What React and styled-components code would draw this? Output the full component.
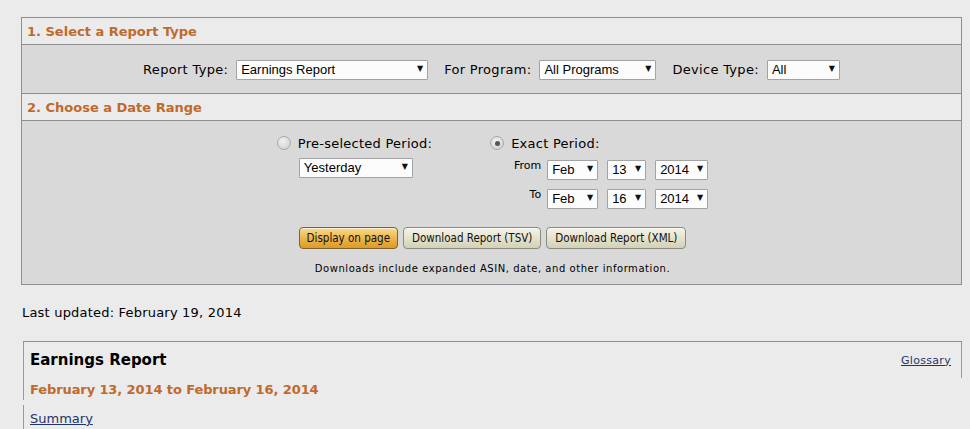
import React from "react";
import styled, { createGlobalStyle } from "styled-components";

const GlobalStyle = createGlobalStyle`
  body {
    margin: 0;
    background: #ebebeb;
    font-family: "DejaVu Sans", Verdana, sans-serif;
    color: #000;
  }
`;

// 페이지 전체
const Page = styled.div`
  padding: 17px 8px 0 21px;
`;

const Panel = styled.div`
  border: 1px solid #8e8e8e;
  background: #ebebeb;
`;

const SectionHeader = styled.div`
  height: 26px;
  line-height: 27px;
  padding-left: 5px;
  font-size: 13px;
  font-weight: bold;
  color: #bf6a2c;
  border-bottom: 1px solid #8e8e8e;
`;

const TypeBand = styled.div`
  height: 48px;
  background: #d9d9d9;
  border-bottom: 1px solid #8e8e8e;
  display: flex;
  justify-content: center;
  align-items: center;
  gap: 16px;
`;

const Field = styled.div`
  display: flex;
  align-items: center;
  gap: 8px;
`;

const Label = styled.span`
  font-size: 13px;
  letter-spacing: 0.3px;
`;

const SelectWrap = styled.div`
  position: relative;
  width: ${(p) => p.w}px;
  height: 20px;
`;

const NativeSelect = styled.select`
  appearance: none;
  -webkit-appearance: none;
  width: 100%;
  height: 100%;
  margin: 0;
  padding: 0 0 0 ${(p) => p.pad || 4}px;
  box-sizing: border-box;
  border: 1px solid #a3a3a3;
  border-radius: 1px;
  background: #fcfcfc;
  font-family: "Liberation Sans", Arial, sans-serif;
  font-size: 13px;
  color: #000;
  outline: none;
`;

const Arrow = styled.span`
  position: absolute;
  right: 5px;
  top: 50%;
  transform: translateY(-50%);
  font-size: 8px;
  line-height: 1;
  pointer-events: none;
  color: #111;
`;

const Select = ({ w, value, pad }) => (
  <SelectWrap w={w}>
    <NativeSelect pad={pad} defaultValue={value}>
      <option>{value}</option>
    </NativeSelect>
    <Arrow>▼</Arrow>
  </SelectWrap>
);

const DateBand = styled.div`
  background: #d9d9d9;
  padding: 14px 0 9px;
`;

const Columns = styled.div`
  display: flex;
  justify-content: center;
  gap: 58px;
  padding-left: 2px;
`;

const Column = styled.div`
  display: flex;
  flex-direction: column;
`;

const RadioRow = styled.label`
  display: flex;
  align-items: center;
  gap: 7px;
  height: 16px;
  font-size: 13px;
  letter-spacing: 0.25px;
  margin-bottom: ${(p) => p.mb}px;
`;

const Radio = styled.span`
  width: 12px;
  height: 12px;
  border-radius: 50%;
  border: 1px solid #a9a9a9;
  background: radial-gradient(circle at 40% 35%, #f2f2f2, #c9c9c9);
  display: flex;
  align-items: center;
  justify-content: center;
  &::after {
    content: "";
    width: 5px;
    height: 5px;
    border-radius: 50%;
    background: ${(p) => (p.checked ? "#555" : "transparent")};
  }
`;

const Indent = styled.div`
  margin-left: 22px;
`;

const DateGrid = styled.div`
  display: grid;
  grid-template-columns: 51px auto;
  row-gap: 9px;
  column-gap: 6px;
`;

const SmallLabel = styled.span`
  font-size: 11px;
  text-align: right;
  line-height: 1;
  padding-top: 1px;
`;

const DateSelects = styled.div`
  display: flex;
  gap: 9px;
`;

const Buttons = styled.div`
  display: flex;
  justify-content: center;
  gap: 5px;
  margin-top: 19px;
  padding-left: 2px;
`;

const Button = styled.button`
  height: 22px;
  padding: 0 ${(p) => (p.primary ? 7 : 8)}px;
  border-radius: 4px;
  border: 1px solid ${(p) => (p.primary ? "#7d6330" : "#8b8b80")};
  background: ${(p) =>
    p.primary
      ? "linear-gradient(#f9dc8c, #eab44a 55%, #dd9a24)"
      : "linear-gradient(#f4f3e8, #e3e1cb 55%, #d2d0b6)"};
  font-family: "DejaVu Sans Condensed", Tahoma, sans-serif;
  font-size: 11.5px;
  color: #111;
  box-shadow: inset 0 1px 0 rgba(255, 255, 255, 0.6);
  cursor: pointer;
`;

const Note = styled.div`
  margin-top: 13px;
  text-align: center;
  font-size: 10px;
  letter-spacing: 0.55px;
  line-height: 13px;
  padding-left: 2px;
`;

const Updated = styled.div`
  margin: 20px 0 0 1px;
  font-size: 13px;
  letter-spacing: 0.2px;
  line-height: 16px;
`;

const ReportBox = styled.div`
  margin: 20px 0 0 2px;
  border-top: 1px solid #8e8e8e;
`;

const ReportRow = styled.div`
  display: flex;
  justify-content: space-between;
  align-items: center;
  padding: 0 10px 0 6px;
  border-left: 1px solid #9a9a9a;
  border-right: ${(p) => (p.edge ? "1px solid #9a9a9a" : "none")};
  height: ${(p) => p.h}px;
  margin-bottom: ${(p) => p.mb || 0}px;
`;

const ReportTitle = styled.h2`
  margin: 0;
  font-size: 15px;
  font-weight: bold;
`;

const DateTitle = styled.h3`
  margin: 0;
  font-size: 13px;
  font-weight: bold;
  color: #bf6a2c;
  letter-spacing: -0.1px;
`;

const Link = styled.a`
  color: #1f3468;
  text-decoration: underline;
  font-size: ${(p) => p.size}px;
  letter-spacing: ${(p) => (p.size > 12 ? 0 : 0.3)}px;
  cursor: pointer;
`;

const App = () => {
  return (
    <>
      <GlobalStyle />
      <Page>
        <Panel>
          <SectionHeader>1. Select a Report Type</SectionHeader>
          <TypeBand>
            <Field>
              <Label>Report Type:</Label>
              <Select w={192} value="Earnings Report" />
            </Field>
            <Field>
              <Label>For Program:</Label>
              <Select w={117} value="All Programs" />
            </Field>
            <Field>
              <Label>Device Type:</Label>
              <Select w={73} value="All" />
            </Field>
          </TypeBand>
          <SectionHeader>2. Choose a Date Range</SectionHeader>
          <DateBand>
            <Columns>
              <Column>
                <RadioRow mb={6}>
                  <Radio />
                  Pre-selected Period:
                </RadioRow>
                <Indent>
                  <Select w={114} value="Yesterday" />
                </Indent>
              </Column>
              <Column>
                <RadioRow mb={8}>
                  <Radio checked />
                  Exact Period:
                </RadioRow>
                <DateGrid>
                  <SmallLabel>From</SmallLabel>
                  <DateSelects>
                    <Select w={51} value="Feb" />
                    <Select w={39} value="13" />
                    <Select w={53} value="2014" />
                  </DateSelects>
                  <SmallLabel>To</SmallLabel>
                  <DateSelects>
                    <Select w={51} value="Feb" />
                    <Select w={39} value="16" />
                    <Select w={53} value="2014" />
                  </DateSelects>
                </DateGrid>
              </Column>
            </Columns>
            <Buttons>
              <Button primary>Display on page</Button>
              <Button>Download Report (TSV)</Button>
              <Button>Download Report (XML)</Button>
            </Buttons>
            <Note>Downloads include expanded ASIN, date, and other information.</Note>
          </DateBand>
        </Panel>
        <Updated>Last updated: February 19, 2014</Updated>
        <ReportBox>
          <ReportRow h={36} edge>
            <ReportTitle>Earnings Report</ReportTitle>
            <Link size={11}>Glossary</Link>
          </ReportRow>
          <ReportRow h={22} mb={5}>
            <DateTitle>February 13, 2014 to February 16, 2014</DateTitle>
          </ReportRow>
          <ReportRow h={26}>
            <Link size={13}>Summary</Link>
          </ReportRow>
        </ReportBox>
      </Page>
    </>
  );
};

export default App;
